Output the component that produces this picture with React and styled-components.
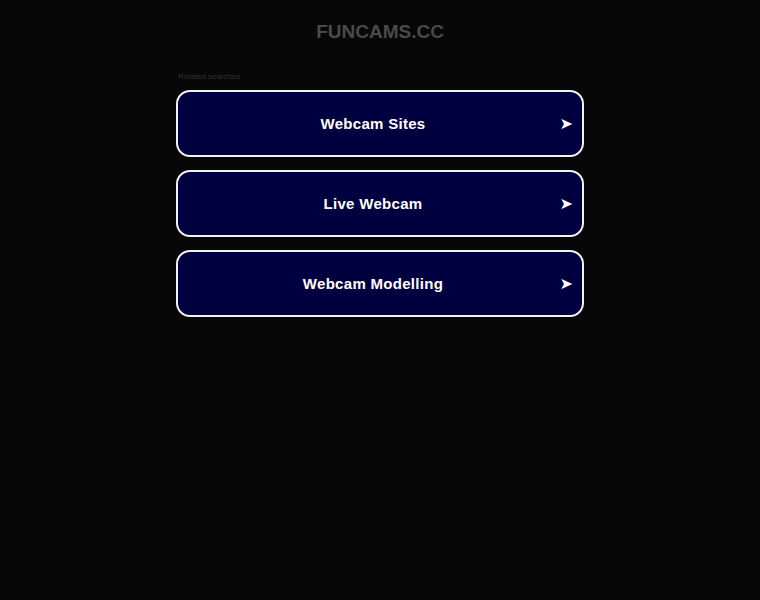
import React from 'react'
import styled, { createGlobalStyle } from 'styled-components'

const GlobalStyle = createGlobalStyle`
  html, body {
    margin: 0;
    padding: 0;
    background: #070707;
    font-family: "Liberation Sans", Arial, sans-serif;
  }
`

const Page = styled.div`
  min-height: 600px;
  display: flex;
  flex-direction: column;
  align-items: center;
`

const Domain = styled.h1`
  margin: 21px 0 0;
  font-size: 19px;
  font-weight: 700;
  line-height: 22px;
  color: #4a4a4a;
`

const Related = styled.div`
  width: 408px;
  margin-top: 29px;
`

const Caption = styled.div`
  font-size: 8px;
  line-height: 10px;
  color: #333;
  padding-left: 2px;
  margin-bottom: 8px;
`

const List = styled.div`
  display: flex;
  flex-direction: column;
  gap: 13px;
`

const Item = styled.a`
  position: relative;
  display: flex;
  align-items: center;
  justify-content: center;
  box-sizing: border-box;
  height: 67px;
  border: 2px solid #f2f2f2;
  border-radius: 14px;
  background: #000040;
  color: #fff;
  text-decoration: none;
  font-size: 15px;
  font-weight: 700;
  letter-spacing: 0.3px;
  padding-right: 14px;
`

const Arrow = styled.span`
  position: absolute;
  right: 9px;
  top: 50%;
  transform: translateY(-55%);
  font-family: "DejaVu Sans", sans-serif;
  font-size: 16px;
  letter-spacing: 0;
`

const searches = ['Webcam Sites', 'Live Webcam', 'Webcam Modelling']

const App = () => {
  return (
    <>
      <GlobalStyle />
      <Page>
        <Domain>FUNCAMS.CC</Domain>
        <Related>
          <Caption>Related searches</Caption>
          <List>
            {searches.map((s) => (
              <Item key={s} href="#">
                {s}
                <Arrow>➤</Arrow>
              </Item>
            ))}
          </List>
        </Related>
      </Page>
    </>
  )
}

export default App
